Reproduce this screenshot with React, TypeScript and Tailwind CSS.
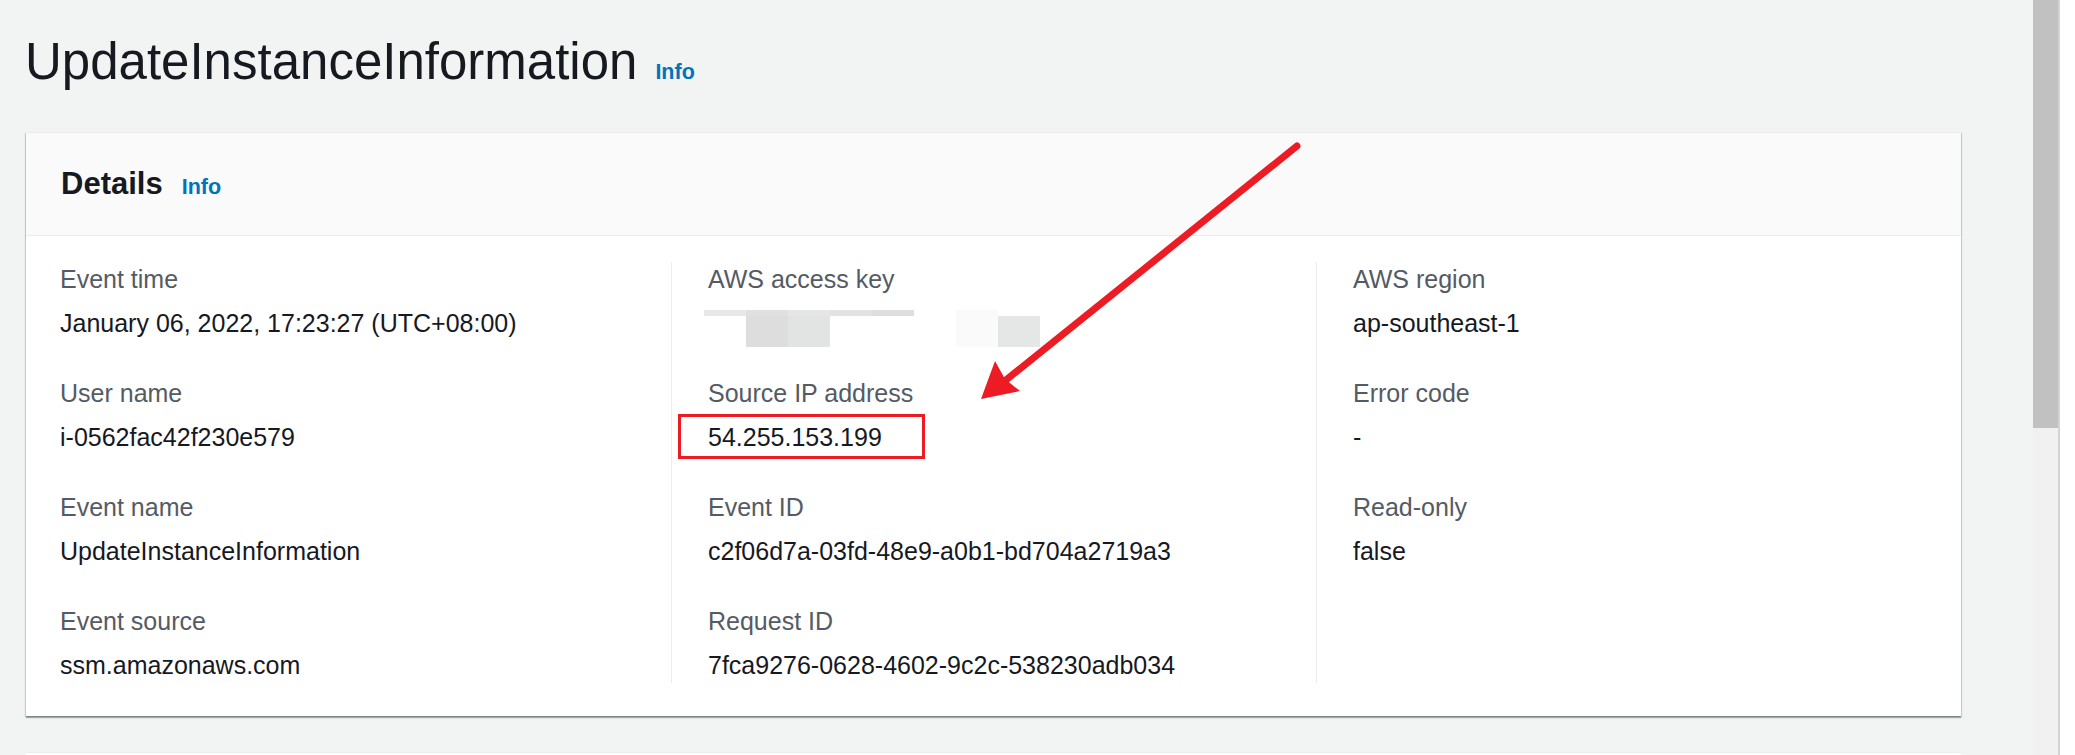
import React from 'react'

type Field = { label: string; value?: string; kind?: 'blur' | 'marked' }

const columns: Field[][] = [
  [
    { label: 'Event time', value: 'January 06, 2022, 17:23:27 (UTC+08:00)' },
    { label: 'User name', value: 'i-0562fac42f230e579' },
    { label: 'Event name', value: 'UpdateInstanceInformation' },
    { label: 'Event source', value: 'ssm.amazonaws.com' },
  ],
  [
    { label: 'AWS access key', kind: 'blur' },
    { label: 'Source IP address', value: '54.255.153.199', kind: 'marked' },
    { label: 'Event ID', value: 'c2f06d7a-03fd-48e9-a0b1-bd704a2719a3' },
    { label: 'Request ID', value: '7fca9276-0628-4602-9c2c-538230adb034' },
  ],
  [
    { label: 'AWS region', value: 'ap-southeast-1' },
    { label: 'Error code', value: '-' },
    { label: 'Read-only', value: 'false' },
  ],
]

// redacted access key (pixelated in the screenshot)
function BlurredKey() {
  return (
    <svg width="340" height="35" className="-ml-[4px] block overflow-visible">
      <rect x="0" y="4" width="42" height="6" fill="#e8e8e9" />
      <rect x="42" y="4" width="42" height="6" fill="#e0e0e0" />
      <rect x="84" y="4" width="42" height="6" fill="#e5e6e6" />
      <rect x="126" y="4" width="42" height="6" fill="#e2e2e3" />
      <rect x="168" y="4" width="42" height="6" fill="#dedede" />
      <rect x="42" y="10" width="42" height="31" fill="#dddddd" />
      <rect x="84" y="10" width="42" height="31" fill="#e2e3e3" />
      <rect x="252" y="4" width="42" height="37" fill="#fafafa" />
      <rect x="294" y="10" width="42" height="31" fill="#e5e6e6" />
    </svg>
  )
}

function Item({ field }: { field: Field }) {
  return (
    <div>
      <div className="text-[25px] leading-[35px] text-[#545b64]">{field.label}</div>
      <div className="mt-[9px] h-[35px] text-[25px] leading-[35px] text-[#16191f]">
        {field.kind === 'blur' ? (
          <BlurredKey />
        ) : field.kind === 'marked' ? (
          <span className="relative inline-block">
            {field.value}
            <span className="absolute -left-[30px] -top-[6px] h-[45px] w-[247px] border-[3px] border-[#ed1c24]" />
          </span>
        ) : (
          field.value
        )}
      </div>
    </div>
  )
}

export default function App() {
  return (
    <div className="flex h-[755px] w-[2075px] overflow-hidden bg-white font-['Liberation_Sans',Arial,sans-serif]">
      <main className="relative w-[2033px] shrink-0 bg-[#f2f3f3]">
        {/* page title */}
        <div className="flex items-baseline gap-[18px] pl-[25px] pt-[32px]">
          <h1 className="text-[51px] font-normal leading-[60px] text-[#16191f]">UpdateInstanceInformation</h1>
          <span className="text-[21.5px] font-bold text-[#0073bb]">Info</span>
        </div>

        {/* details card */}
        <section className="ml-[26px] mt-[40px] w-[1935px] border-t border-[#eaeded] bg-white shadow-[0_2px_1px_0_rgba(0,28,36,0.3),1px_1px_1px_0_rgba(0,28,36,0.15),-1px_1px_1px_0_rgba(0,28,36,0.15)]">
          <div className="flex h-[103px] items-center border-b border-[#eaeded] bg-[#fafafa] pl-[35px]">
            <div className="flex items-baseline gap-[19px]">
              <h2 className="text-[31px] font-bold leading-[40px] text-[#16191f]">Details</h2>
              <span className="text-[21.5px] font-bold text-[#0073bb]">Info</span>
            </div>
          </div>
          <div className="grid grid-cols-3 pb-[33px] pt-[26px]">
            {columns.map((col, i) => (
              <div
                key={i}
                className={`flex flex-col gap-[35px] ${i === 0 ? 'pl-[34px]' : 'border-l border-[#eaeded] pl-[36px]'}`}
              >
                {col.map(f => (
                  <Item key={f.label} field={f} />
                ))}
              </div>
            ))}
          </div>
        </section>

        {/* next card, cut off by the viewport */}
        <section className="ml-[26px] mt-[36px] h-[200px] w-[1935px] border-t border-[#eaeded] bg-white" />

        {/* annotation arrow */}
        <svg className="pointer-events-none absolute left-0 top-0" width="2033" height="755">
          <line x1="1297" y1="146" x2="1006" y2="380" stroke="#ed1c24" strokeWidth="7" strokeLinecap="round" />
          <polygon points="981,399 995,361 1005,379 1020,391" fill="#ed1c24" />
        </svg>
      </main>

      {/* scrollbar */}
      <div className="flex w-[25px] shrink-0 flex-col">
        <div className="h-[428px] bg-[#c1c1c1]" />
        <div className="flex-1 bg-[#f1f1f1]" />
      </div>
      <div className="w-[2px] shrink-0 bg-[#d4d4d4]" />
      <div className="flex-1 bg-white" />
    </div>
  )
}
